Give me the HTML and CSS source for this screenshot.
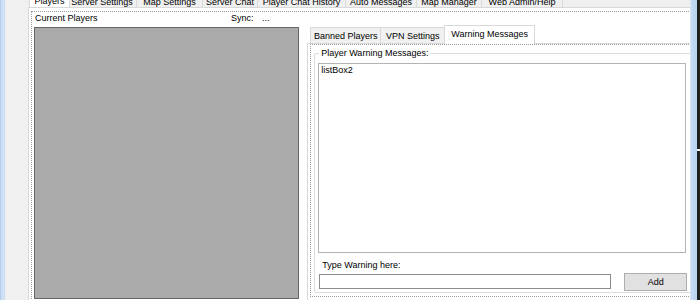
FILE: index.html
```html
<!DOCTYPE html>
<html lang="en">
<head>
  <meta charset="UTF-8" />
  <title>Server Manager</title>
  <link rel="stylesheet" href="styles.css">
</head>
<body>
  <div class="window">
    <div class="frame-left"></div>

    <div class="form">
      <!-- Main tabs -->
      <div class="tabs">
        <div class="tab-strip">
          <span class="tab active">Players</span>
          <span class="tab">Server Settings</span>
          <span class="tab">Map Settings</span>
          <span class="tab">Server Chat</span>
          <span class="tab">Player Chat History</span>
          <span class="tab">Auto Messages</span>
          <span class="tab">Map Manager</span>
          <span class="tab">Web Admin/Help</span>
        </div>

        <div class="tab-page">
          <div class="panel">
            <div class="players-head">
              <span class="current">Current Players</span>
              <span class="sync">Sync:</span>
              <span>...</span>
            </div>

            <div class="players-body">
              <div class="player-list"></div>

              <!-- Nested tabs -->
              <div class="subtabs">
                <div class="sub-strip">
                  <span class="subtab">Banned Players</span>
                  <span class="subtab">VPN Settings</span>
                  <span class="subtab active">Warning Messages</span>
                </div>
                <div class="sub-page">
                  <div class="sub-panel">
                    <div class="group">
                      <span class="group-title">Player Warning Messages:</span>
                      <div class="listbox">listBox2</div>
                      <div class="type-label">Type Warning here:</div>
                      <div class="input-row">
                        <input type="text" class="textbox">
                        <button class="add-btn">Add</button>
                      </div>
                    </div>
                  </div>
                </div>
              </div>
            </div>
          </div>
        </div>
      </div>
    </div>

    <div class="frame-right"><span class="notch"></span></div>
  </div>
</body>
</html>
```

FILE: styles.css
```css
body {
  margin: 0;
  font-family: "Liberation Sans", Arial, sans-serif;
  font-size: 9px;
  color: #000;
}

.window {
  display: flex;
  width: 700px;
  height: 300px;
  overflow: hidden;
  background: #f0f0f0;
}

/* Window frame */
.frame-left {
  width: 5px;
  flex-shrink: 0;
  background: linear-gradient(to right, #b3cced, #d6e5f7 60%, #c3d8f1);
}
.frame-right {
  width: 10px;
  flex-shrink: 0;
  display: flex;
  flex-direction: column;
  justify-content: center;
  align-items: flex-end;
  background: linear-gradient(to right, #dbe7f7 0, #c3d8f2 20%, #b9d1ef 70%, #1d1f21 70%);
}
.frame-right .notch {
  width: 3px;
  height: 2px;
  background: #f4f4f4;
}

.form {
  flex: 1;
  min-width: 0;
  overflow: hidden;
  padding-left: 23px;
}

/* Main tabs */
.tabs {
  width: 680px;
}
.tab-strip {
  display: flex;
  align-items: flex-end;
  height: 18px;
  margin-top: -11px;
  padding-left: 3px;
}
.tab {
  height: 16px;
  line-height: 15px;
  padding-top: 3px;
  text-align: center;
  box-sizing: border-box;
  border: 1px solid #d9d9d9;
  border-bottom: none;
  background: #f0f0f0;
  margin-left: -1px;
  white-space: nowrap;
}
.tab:nth-child(2) { width: 70px; }
.tab:nth-child(3) { width: 67px; }
.tab:nth-child(4) { width: 56px; }
.tab:nth-child(5) { width: 89px; }
.tab:nth-child(6) { width: 72px; }
.tab:nth-child(7) { width: 66px; }
.tab:nth-child(8) { width: 82px; }
.tab.active {
  width: 41px;
  height: 18px;
  padding-top: 4px;
  background: #fff;
  margin: 0 -2px 0 -2px;
  position: relative;
  z-index: 1;
}

.tab-page {
  background: #fff;
  border: 1px solid #d9d9d9;
  padding: 3px 0 0 2px;
  height: 320px;
}
.panel {
  border: 1px dotted #9c9c9c;
  padding-left: 2px;
  height: 320px;
}

.players-head {
  display: flex;
  line-height: 11px;
  margin: 1px 0 3px;
  padding-left: 1px;
}
.players-head .current {
  width: 196px;
}
.players-head .sync {
  width: 31px;
}

.players-body {
  display: flex;
  align-items: flex-start;
}
.player-list {
  width: 266px;
  height: 272px;
  box-sizing: border-box;
  background: #abaaab;
  border: 1px solid #666;
}

/* Nested tabs */
.subtabs {
  margin: -2px 0 0 8px;
  width: 400px;
}
.sub-strip {
  display: flex;
  align-items: flex-end;
  height: 18px;
  padding-left: 4px;
}
.subtab {
  height: 16px;
  line-height: 16px;
  text-align: center;
  box-sizing: border-box;
  border: 1px solid #d9d9d9;
  border-bottom: none;
  background: #f0f0f0;
  margin-left: -1px;
  white-space: nowrap;
}
.subtab:nth-child(1) { width: 71px; }
.subtab:nth-child(2) { width: 65px; }
.subtab.active {
  width: 91px;
  height: 19px;
  line-height: 17px;
  background: #fff;
  margin-bottom: -1px;
  position: relative;
  z-index: 1;
}
.sub-page {
  border: 1px solid #d9d9d9;
  padding: 0 0 0 2px;
  height: 270px;
}
.sub-panel {
  box-sizing: border-box;
  height: 253px;
  border: 1px dotted #9c9c9c;
  padding-top: 8px;
}

.group {
  box-sizing: border-box;
  height: 240px;
  margin-left: 3px;
  border: 1px solid #dcdcdc;
  border-radius: 2px;
  padding-left: 3px;
}
.group-title {
  display: table;
  margin: -6px 0 0 1px;
  padding: 0 2px;
  line-height: 11px;
  background: #fff;
}
.listbox {
  box-sizing: border-box;
  width: 368px;
  height: 190px;
  margin-top: 4px;
  border: 1px solid #b4b4b4;
  padding: 1px 2px;
  line-height: 11px;
}
.type-label {
  margin-top: 7px;
  padding-left: 4px;
  line-height: 11px;
}
.input-row {
  display: flex;
  align-items: flex-start;
  margin-top: 2px;
}
.textbox {
  box-sizing: border-box;
  width: 292px;
  height: 15px;
  margin: 1px 0 0 1px;
  border: 1px solid #8c8c8c;
  padding: 0;
  background: #fff;
}
.add-btn {
  box-sizing: border-box;
  width: 63px;
  height: 18px;
  margin-left: 13px;
  padding: 0;
  border: 1px solid #adadad;
  background: #e1e1e1;
  font-family: inherit;
  font-size: 9px;
  color: #000;
}
```
